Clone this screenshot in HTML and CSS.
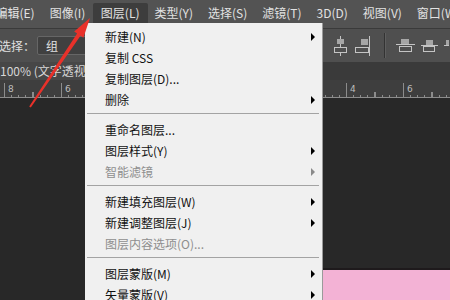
FILE: index.html
```html
<!DOCTYPE html>
<html lang="zh-CN">
<head>
<meta charset="utf-8">
<title>图层菜单</title>
<link rel="stylesheet" href="styles.css">
</head>
<body>
<div class="app">
  <div class="menubar">
    <span class="mi first">编辑(E)</span>
    <span class="mi">图像(I)</span>
    <span class="mi active">图层(L)</span>
    <span class="mi">类型(Y)</span>
    <span class="mi">选择(S)</span>
    <span class="mi">滤镜(T)</span>
    <span class="mi">3D(D)</span>
    <span class="mi">视图(V)</span>
    <span class="mi">窗口(W)</span>
  </div>
  <div class="options">
    <span class="opt-label">选择：</span>
    <span class="select">组</span>
    <svg class="align-tools" width="117" height="28" viewBox="0 0 117 28">
      <g stroke="#c4c4c4" stroke-width="1" fill="none" shape-rendering="crispEdges">
        <line x1="8.5" y1="4" x2="8.5" y2="24"/>
        <rect x="2.5" y="15.5" width="12" height="5" fill="#4f4f4f"/>
        <line x1="37.5" y1="4" x2="37.5" y2="24"/>
        <rect x="23.5" y="15.5" width="13" height="5" fill="#4f4f4f"/>
        <line x1="64" y1="12.5" x2="83" y2="12.5"/>
        <rect x="67.5" y="14.5" width="12" height="5"/>
        <line x1="89" y1="13.5" x2="106" y2="13.5"/>
        <rect x="91.5" y="14.5" width="11" height="5"/>
        <line x1="112" y1="13.5" x2="117" y2="13.5"/>
      </g>
      <g fill="#a6a6a6" shape-rendering="crispEdges">
        <rect x="5" y="7" width="7" height="5"/>
        <rect x="29" y="7" width="7" height="6"/>
        <rect x="69" y="7" width="8" height="5"/>
        <rect x="94" y="8" width="7" height="5"/>
        <rect x="114" y="8" width="4" height="5"/>
      </g>
      <line x1="52.5" y1="1" x2="52.5" y2="26" stroke="#333" shape-rendering="crispEdges"/>
      <line x1="53.5" y1="1" x2="53.5" y2="26" stroke="#5e5e5e" shape-rendering="crispEdges"/>
    </svg>
  </div>
  <div class="tabs"><span class="tab">100% (文字透视图层, RGB/8)</span></div>
  <div class="ruler">
    <span class="rc">8</span><span class="rc">6</span><span class="rc">4</span><span class="rc">2</span>
    <span class="rc">0</span><span class="rc">2</span><span class="rc">4</span><span class="rc">6</span>
  </div>
  <div class="canvas"><div class="pink"></div></div>
</div>

<div class="dropdown">
  <div class="item sub">新建(N)</div>
  <div class="item">复制 CSS</div>
  <div class="item">复制图层(D)...</div>
  <div class="item sub">删除</div>
  <div class="sep"></div>
  <div class="item">重命名图层...</div>
  <div class="item sub">图层样式(Y)</div>
  <div class="item sub disabled">智能滤镜</div>
  <div class="sep"></div>
  <div class="item sub">新建填充图层(W)</div>
  <div class="item sub">新建调整图层(J)</div>
  <div class="item disabled">图层内容选项(O)...</div>
  <div class="sep"></div>
  <div class="item sub">图层蒙版(M)</div>
  <div class="item sub">矢量蒙版(V)</div>
</div>

<svg class="arrow" width="450" height="300" viewBox="0 0 450 300">
  <polygon fill="#e8312a" points="90,18 83.4,37.7 80.5,35.7 30.8,107.6 29.2,106.4 77.1,33.5 74.2,31.5"/>
</svg>
</body>
</html>
```
FILE: styles.css
```css
* { box-sizing: border-box; }
html, body {
  margin: 0;
  padding: 0;
  width: 450px;
  height: 300px;
  overflow: hidden;
  background: #282828;
  font-family: "Noto Sans CJK SC", "Noto Sans", sans-serif;
  font-size: 12px;
}
.app {
  display: flex;
  flex-direction: column;
  width: 450px;
  height: 300px;
}
.menubar {
  height: 28px;
  flex-shrink: 0;
  background: #535353;
  display: flex;
  align-items: flex-start;
  color: #e2e2e2;
  white-space: nowrap;
  overflow: hidden;
}
.mi {
  height: 20px;
  margin-top: 3px;
  line-height: 20px;
  padding: 0 7.5px;
  flex-shrink: 0;
}
.mi.first { margin-left: -12px; }
.mi.active {
  background: #3d3d3d;
  border-radius: 2px 2px 0 0;
  padding: 0 9px 0 8px;
  margin-right: -1.5px;
}
.options {
  height: 34px;
  flex-shrink: 0;
  background: #4f4f4f;
  border-top: 1px solid #3a3a3a;
  display: flex;
  align-items: center;
  color: #e0e0e0;
  overflow: hidden;
}
.opt-label { margin-left: -1px; width: 38px; flex-shrink: 0; }
.select {
  width: 75px;
  height: 19px;
  line-height: 17px;
  padding-left: 8px;
  background: #404040;
  border: 1px solid #666;
  border-radius: 2px;
  flex-shrink: 0;
}
.align-tools {
  flex-shrink: 0;
  margin-left: 220px;
}
.tabs {
  height: 18px;
  flex-shrink: 0;
  background: #3a3a3a;
  display: flex;
  overflow: hidden;
}
.tab {
  background: #474747;
  color: #d6d6d6;
  line-height: 18px;
  padding-right: 10px;
  white-space: nowrap;
}
.ruler {
  height: 18px;
  flex-shrink: 0;
  display: flex;
  padding-left: 4px;
  background-color: #3e3e3e;
  background-image:
    linear-gradient(#8c8c8c, #8c8c8c),
    repeating-linear-gradient(to right, #8c8c8c 0 1px, transparent 1px 7.125px),
    repeating-linear-gradient(to right, #8c8c8c 0 1px, transparent 1px 28.5px);
  background-size: 100% 1px, 100% 3px, 100% 6px;
  background-position: 0 100%, 4px 100%, 4px 100%;
  background-repeat: no-repeat;
  overflow: hidden;
}
.rc {
  width: 57px;
  flex-shrink: 0;
  margin-top: 3px;
  border-left: 1px solid #8c8c8c;
  padding-left: 3px;
  font-family: "DejaVu Sans", sans-serif;
  font-size: 9px;
  line-height: 13px;
  color: #bdbdbd;
}
.canvas {
  flex: 1;
  background: #282828;
  display: flex;
  flex-direction: column;
}
.pink {
  margin-top: auto;
  margin-left: 200px;
  height: 32px;
  border-top: 2px solid #1e1a1c;
  background: #f3b2d5;
}
.dropdown {
  position: absolute;
  left: 85px;
  top: 23px;
  width: 238px;
  height: 290px;
  background: #f0f0f0;
  border-right: 1px solid #9a9a9a;
  padding-top: 3px;
  color: #111;
}
.item {
  height: 21px;
  line-height: 21px;
  padding-left: 20px;
  position: relative;
  white-space: nowrap;
}
.item.disabled { color: #8e8e8e; }
.item.sub::after {
  content: "";
  position: absolute;
  right: 7px;
  top: 7px;
  border-left: 4px solid #000;
  border-top: 4px solid transparent;
  border-bottom: 4px solid transparent;
}
.item.sub.disabled::after { border-left-color: #8a8a8a; }
.sep {
  height: 9px;
  padding-top: 3px;
}
.sep::before {
  content: "";
  display: block;
  height: 1px;
  margin: 0 3px 0 2px;
  background: #a3a3a3;
}
.arrow {
  position: absolute;
  left: 0;
  top: 0;
  pointer-events: none;
}
```
